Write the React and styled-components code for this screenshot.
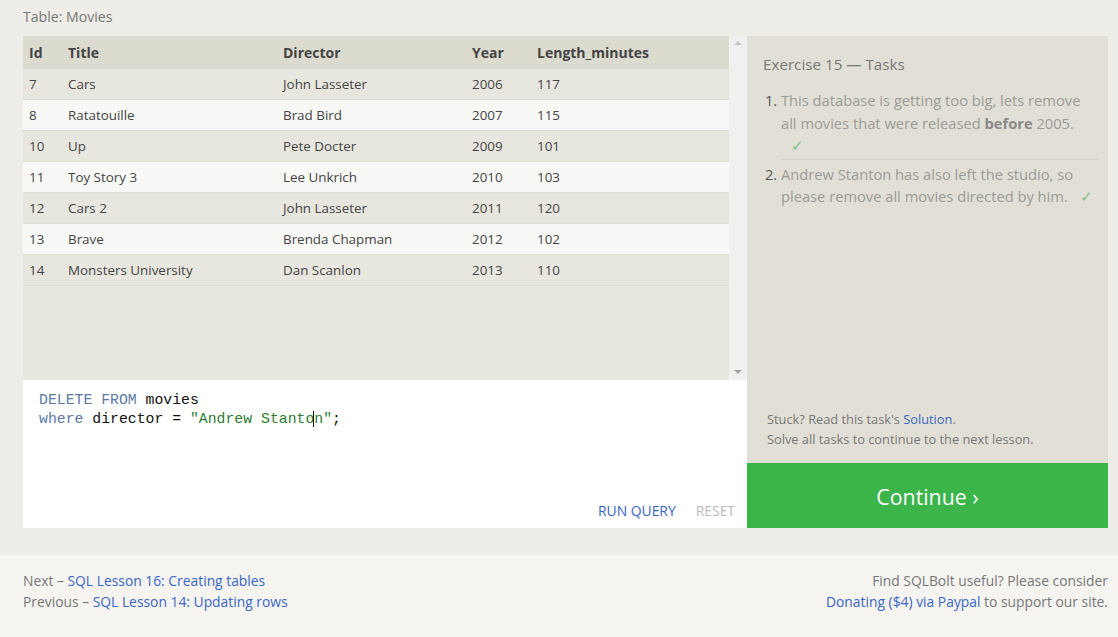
import React from "react";
import styled, { createGlobalStyle } from "styled-components";

const GlobalStyle = createGlobalStyle`
  html, body {
    margin: 0;
    padding: 0;
    background: #efede7;
    font-family: "Open Sans", "Noto Sans", sans-serif;
  }
`;

const Page = styled.div`
  width: 1118px;
  min-height: 637px;
  display: flex;
  flex-direction: column;
`;

const Main = styled.div`
  background: #efede7;
  padding: 6px 10px 27px 23px;
`;

const Caption = styled.div`
  font-size: 14.1px;
  color: #777;
  height: 30px;
  line-height: 22px;
`;

const Workspace = styled.div`
  display: grid;
  grid-template-columns: 724px 361px;
`;

const LeftCol = styled.div`
  display: flex;
  flex-direction: column;
`;

const TableBox = styled.div`
  height: 344px;
  display: flex;
  background: #e8e7df;
`;

const TableScroll = styled.div`
  flex: 1;
`;

const Table = styled.table`
  width: 100%;
  border-collapse: collapse;
  font-size: 13.4px;
  color: #444;
`;

const Th = styled.th`
  background: #dcdbd0;
  text-align: left;
  font-weight: 700;
  font-size: 14px;
  height: 33px;
  padding: 0 6px;
  width: ${(p) => p.w || "auto"};
`;

const Tr = styled.tr`
  background: ${(p) => (p.alt ? "#f8f8f7" : "#e8e7df")};
  border-bottom: 1px solid #dedcd4;
`;

const Td = styled.td`
  height: 30px;
  padding: 0 6px;
`;

const ScrollBar = styled.div`
  width: 18px;
  background: #f0f0f0;
  display: flex;
  flex-direction: column;
  justify-content: space-between;
  align-items: center;
  padding: 5px 0 6px;
  box-sizing: border-box;
`;

const Arrow = styled.div`
  width: 0;
  height: 0;
  border-left: 4px solid transparent;
  border-right: 4px solid transparent;
  ${(p) =>
    p.down ? "border-top: 4px solid #a3a3a3;" : "border-bottom: 4px solid #c4c4c4;"}
`;

const Editor = styled.div`
  height: 148px;
  background: #fff;
  display: flex;
  flex-direction: column;
  justify-content: space-between;
  box-sizing: border-box;
  padding: 11px 12px 8px 16px;
`;

const Code = styled.pre`
  margin: 0;
  font-family: "Liberation Mono", monospace;
  font-size: 14.8px;
  line-height: 19px;
  color: #111;
`;

const Kw = styled.span`
  color: #5b7aa6;
`;

const Str = styled.span`
  color: #2e7d32;
`;

const Caret = styled.span`
  border-left: 1px solid #111;
  margin-left: -1px;
`;

const Actions = styled.div`
  display: flex;
  justify-content: flex-end;
  gap: 20px;
  font-size: 13.9px;
`;

const Action = styled.span`
  color: ${(p) => (p.muted ? "#bbb" : "#3a66c4")};
`;

const RightCol = styled.div`
  display: flex;
  flex-direction: column;
`;

const TaskPanel = styled.div`
  height: 427px;
  background: #e2e0d6;
  padding: 18px 10px 14px 16px;
  box-sizing: border-box;
  display: flex;
  flex-direction: column;
`;

const TaskTitle = styled.div`
  font-size: 15.2px;
  color: #777;
  margin-bottom: 15px;
`;

const TaskList = styled.ol`
  margin: 0;
  padding: 0 0 0 18px;
  flex: 1;
  font-size: 14.7px;
  color: #9b9b96;
  line-height: 22.5px;
`;

const Task = styled.li`
  color: #9b9b96;
  padding: 0 0 2px;
  &::marker {
    color: #555;
  }
  & + & {
    border-top: 1px solid #d4d2c8;
    padding-top: 3px;
  }
`;

const Strong = styled.b`
  color: #888;
`;

const Check = styled.span`
  color: #7fc28a;
  margin-left: ${(p) => p.indent || "8px"};
`;

const Help = styled.div`
  font-size: 12.8px;
  color: #777;
  line-height: 20px;
  padding-left: 4px;
`;

const Link = styled.a`
  color: #3a66c4;
  text-decoration: none;
`;

const ContinueButton = styled.div`
  height: 65px;
  background: #3bb44a;
  color: #fff;
  font-size: 21.3px;
  display: flex;
  align-items: center;
  justify-content: center;
  padding-top: 2px;
  box-sizing: border-box;
`;

const Footer = styled.div`
  flex: 1;
  background: #f5f4f1;
  padding: 15px 10px 0 23px;
  display: flex;
  justify-content: space-between;
  font-size: 13.85px;
  line-height: 21px;
  color: #777;
`;

const FooterRight = styled.div`
  text-align: right;
`;

const movies = [
  [7, "Cars", "John Lasseter", 2006, 117],
  [8, "Ratatouille", "Brad Bird", 2007, 115],
  [10, "Up", "Pete Docter", 2009, 101],
  [11, "Toy Story 3", "Lee Unkrich", 2010, 103],
  [12, "Cars 2", "John Lasseter", 2011, 120],
  [13, "Brave", "Brenda Chapman", 2012, 102],
  [14, "Monsters University", "Dan Scanlon", 2013, 110],
];

export default function App() {
  return (
    <Page>
      <GlobalStyle />
      <Main>
        <Caption>Table: Movies</Caption>
        <Workspace>
          <LeftCol>
            <TableBox>
              <TableScroll>
                <Table>
                  <thead>
                    <tr>
                      <Th w="27px">Id</Th>
                      <Th w="203px">Title</Th>
                      <Th w="177px">Director</Th>
                      <Th w="53px">Year</Th>
                      <Th>Length_minutes</Th>
                    </tr>
                  </thead>
                  <tbody>
                    {movies.map((m, i) => (
                      <Tr key={m[0]} alt={i % 2 === 1}>
                        {m.map((v, j) => (
                          <Td key={j}>{v}</Td>
                        ))}
                      </Tr>
                    ))}
                  </tbody>
                </Table>
              </TableScroll>
              <ScrollBar>
                <Arrow />
                <Arrow down />
              </ScrollBar>
            </TableBox>
            <Editor>
              <Code>
                <Kw>DELETE FROM</Kw> movies{"\n"}
                <Kw>where</Kw> director = <Str>"Andrew Stanto<Caret />n"</Str>;
              </Code>
              <Actions>
                <Action>RUN QUERY</Action>
                <Action muted>RESET</Action>
              </Actions>
            </Editor>
          </LeftCol>
          <RightCol>
            <TaskPanel>
              <TaskTitle>Exercise 15 — Tasks</TaskTitle>
              <TaskList>
                <Task>
                  This database is getting too big, lets remove all movies that
                  were released <Strong>before</Strong> 2005.
                  <br />
                  <Check indent="10px">✓</Check>
                </Task>
                <Task>
                  Andrew Stanton has also left the studio, so please remove all
                  movies directed by him. <Check>✓</Check>
                </Task>
              </TaskList>
              <Help>
                Stuck? Read this task's <Link>Solution</Link>.
                <br />
                Solve all tasks to continue to the next lesson.
              </Help>
            </TaskPanel>
            <ContinueButton>Continue ›</ContinueButton>
          </RightCol>
        </Workspace>
      </Main>
      <Footer>
        <div>
          Next – <Link>SQL Lesson 16: Creating tables</Link>
          <br />
          Previous – <Link>SQL Lesson 14: Updating rows</Link>
        </div>
        <FooterRight>
          Find SQLBolt useful? Please consider
          <br />
          <Link>Donating ($4) via Paypal</Link> to support our site.
        </FooterRight>
      </Footer>
    </Page>
  );
}
